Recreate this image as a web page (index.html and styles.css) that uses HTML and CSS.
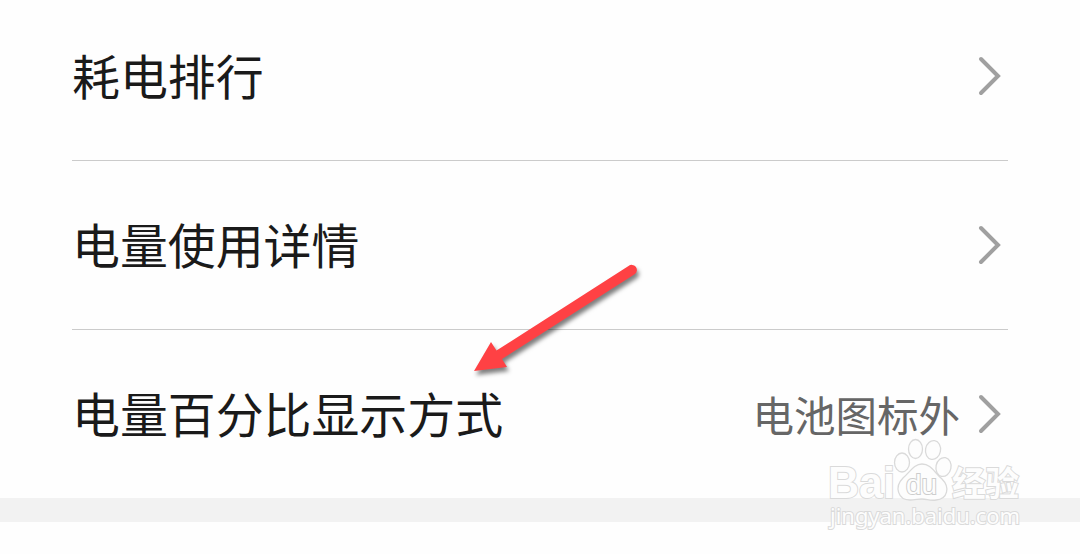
FILE: index.html
```html
<!DOCTYPE html>
<html lang="zh-CN">
<head>
  <meta charset="utf-8">
  <title>电池</title>
  <link rel="stylesheet" href="styles.css">
</head>
<body>
  <div class="page">
    <div class="list">
      <div class="row">
        <span class="title">耗电排行</span>
        <svg class="chevron" width="24" height="42" viewBox="0 0 24 42"><path d="M3 4L20 21L3 38"/></svg>
      </div>
      <div class="row">
        <span class="title">电量使用详情</span>
        <svg class="chevron" width="24" height="42" viewBox="0 0 24 42"><path d="M3 4L20 21L3 38"/></svg>
      </div>
      <div class="row">
        <span class="title">电量百分比显示方式</span>
        <span class="value">电池图标外</span>
        <svg class="chevron" width="24" height="42" viewBox="0 0 24 42"><path d="M3 4L20 21L3 38"/></svg>
      </div>
    </div>
    <div class="divider"></div>

    <!-- seta -->
    <svg class="arrow" width="190" height="130" viewBox="0 0 190 130">
      <path d="M14 116L31 87L36.500 95.500L168.500 11A5 5 0 0 1 175 19L42 104L47 112Z"/>
    </svg>

    <svg class="watermark" width="230" height="110" viewBox="0 0 230 110">
      <text class="brand" x="18" y="68" textLength="67" lengthAdjust="spacingAndGlyphs">Bai</text>
      <ellipse cx="92" cy="32.500" rx="7.500" ry="9.500"/>
      <ellipse cx="105.500" cy="19" rx="7" ry="9.500"/>
      <ellipse cx="123" cy="20" rx="7.500" ry="9.500" transform="rotate(10 123 20)"/>
      <ellipse cx="133.500" cy="37" rx="7.500" ry="9.500" transform="rotate(12 133.500 37)"/>
      <path d="M112 34C104 34 100 42 93 48C84 57 88 70 100 70C105 70 108 69 112 69C117 69 120 71 126 70C138 69 140 57 132 49C124 42 121 34 112 34Z"/>
      <text class="du" x="96" y="64" textLength="31" lengthAdjust="spacingAndGlyphs">du</text>
      <text class="cn" x="142" y="66" textLength="67" lengthAdjust="spacingAndGlyphs">经验</text>
      <text class="url" x="20" y="94" textLength="190" lengthAdjust="spacingAndGlyphs">jingyan.baidu.com</text>
    </svg>
  </div>
</body>
</html>
```
FILE: styles.css
```css
body {
  margin: 0;
  overflow: hidden;
  background-color: #fefefe;
  font-family: "Noto Sans CJK SC", sans-serif;
}

.page {
  position: relative;
  height: 554px;
  overflow: hidden;
}

.list {
  margin-top: -8px;
  padding: 0 72px;
}

.row {
  display: flex;
  align-items: center;
  height: 168px;
  border-bottom: 1px solid #cbcbcb;
}

.row:last-child {
  border-bottom: none;
}

.title {
  flex: 1;
  padding-bottom: 5px;
  font-size: 47.900px;
  line-height: 70px;
  color: #1a1a1a;
}

.value {
  margin-right: 18px;
  padding-bottom: 1px;
  font-size: 41.500px;
  line-height: 62px;
  color: #666;
}

.chevron {
  margin-right: 6px;
  fill: none;
  stroke: #a0a0a0;
  stroke-width: 4;
  stroke-linecap: round;
}

.divider {
  height: 24px;
  background-color: #f2f2f2;
}

.arrow {
  position: absolute;
  left: 460px;
  top: 255px;
  overflow: visible;
  fill: #ff4144;
  filter: drop-shadow(2px 4px 2px rgba(0, 0, 0, 0.5));
}

/* marca d'água por cima da lista */
.watermark {
  position: absolute;
  left: 810px;
  top: 430px;
  fill: #fdfdfd;
  stroke: #dadada;
  stroke-width: 1.300;
}

.watermark text {
  paint-order: stroke;
  stroke-width: 2;
}

.brand {
  font: bold 45px "Liberation Sans", sans-serif;
}

.watermark .du {
  font: 28px "Liberation Sans", sans-serif;
  stroke: #cdcdcd;
}

.cn {
  font: bold 34px "Noto Sans CJK SC", sans-serif;
}

.url {
  font: 22px "Noto Sans", sans-serif;
}
```
